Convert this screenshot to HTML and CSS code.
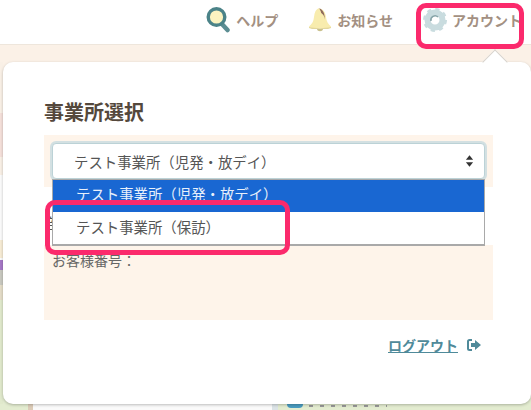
FILE: index.html
```html
<!DOCTYPE html>
<html>
<head>
    <title>事業所選択</title>
    <link rel="stylesheet" href="styles.css">
</head>
<body>
    <header class="topbar">
        <a class="nav-item nav-help">
            <svg width="24" height="26" viewBox="0 0 24 26">
                <path d="M15 16l6.500 7" stroke="#5b8d92" stroke-width="4.500" stroke-linecap="round"/>
                <circle cx="10.500" cy="10" r="8.300" fill="#fbf3c0" stroke="#4b8388" stroke-width="3.400"/>
            </svg>
            <span>ヘルプ</span>
        </a>
        <a class="nav-item nav-notice">
            <svg width="24" height="26" viewBox="0 0 24 26">
                <path d="M11 1C8 2 6.500 5 6 10c-.4 4.500-2 7-5 9.500 0 1 1 1.500 2 1.500h18c1 0 2-.5 2-1.500-3-2.500-4.500-5-5-9.500-.5-5-3-8-7-8.500z" fill="#f8ecae"/>
                <path d="M11 1.500c3.500.5 6 4.500 5.800 11-.2-3.500-2-5.500-3.600-6.500-.4-2-1.200-3.500-2.200-4.500z" fill="#8f6a5c"/>
                <path d="M1 20c5 1.500 17 1.500 22 0v1l-3 1H4l-3-1z" fill="#e2d69c"/>
                <path d="M9 22h6c-.3 3-5.700 3-6 0z" fill="#c9c08c"/>
            </svg>
            <span>お知らせ</span>
        </a>
        <a class="nav-item nav-account">
            <svg width="24" height="24" viewBox="0 0 24 24">
                <circle cx="12" cy="12" r="7.500" fill="none" stroke="#c9dcdf" stroke-width="6"/>
                <circle cx="12" cy="12" r="10.300" fill="none" stroke="#c9dcdf" stroke-width="3.400" stroke-dasharray="4 4.090"/>
                <path d="M8 13a4.200 4.200 0 0 1 7-4" fill="none" stroke="#86a4a8" stroke-width="1.600"/>
            </svg>
            <span>アカウント</span>
        </a>
    </header>
    <div class="band"></div>

    <main class="page">
        <div class="side-strip"></div>
        <section class="popup">
            <div class="popup-arrow"></div>
            <h2 class="popup-title">事業所選択</h2>
            <div class="office-panel">
                <div class="office-box">
                    <div class="select-box">
                        <span>テスト事業所（児発・放デイ）</span>
                        <svg width="9" height="12" viewBox="0 0 10 13">
                            <path d="M5 0l4 5H1zM5 13l4-5H1z" fill="#333"/>
                        </svg>
                    </div>
                </div>
                <div class="dept-row">部署</div>
                <div class="customer-box">お客様番号：</div>
                <ul class="select-list">
                    <li class="selected">テスト事業所（児発・放デイ）</li>
                    <li>テスト事業所（保訪）</li>
                </ul>
            </div>
            <div class="logout-row">
                <a class="logout-link">ログアウト</a>
                <svg width="14" height="12" viewBox="0 0 14 12">
                    <path d="M5 1H2.500A1.500 1.500 0 0 0 1 2.500v7A1.500 1.500 0 0 0 2.500 11H5" fill="none" stroke="#4f8a9a" stroke-width="2"/>
                    <path d="M8 1l6 5-6 5V8H4V4h4z" fill="#4f8a9a"/>
                </svg>
            </div>
        </section>
    </main>

    <footer class="under-strip">
        <div class="under-green"></div>
        <div class="under-white"></div>
        <div class="under-card">
            <span class="under-dot"></span>
            <span class="under-dots"></span>
        </div>
    </footer>

    <div class="mark mark-account"></div>
    <div class="mark mark-option"></div>
</body>
</html>
```

FILE: styles.css
```css
html, body {
    margin: 0;
    height: 410px;
    overflow: hidden;
}

body {
    position: relative;
    font-family: "Noto Sans CJK JP", "Noto Sans", sans-serif;
    color: #555;
    background-color: #e3ecd0;
}

.topbar {
    height: 45px;
    display: flex;
    justify-content: flex-end;
    align-items: center;
    gap: 30px;
    padding-right: 9px;
    background-color: #fff;
    box-sizing: border-box;
    border-bottom: 1px solid #eee6dc;
}

.nav-item {
    display: flex;
    align-items: center;
    gap: 5px;
    font-size: 14px;
    font-weight: bold;
    color: #a39082;
    margin-top: -4px;
}

.nav-help {
    gap: 6px;
}

.band {
    height: 17px;
    background-color: #fbf1e7;
    box-sizing: border-box;
}

.page {
    display: flex;
    height: 342px;
    background: linear-gradient(#fbf1e7 50%, #e3ecd0 50%);
}

.side-strip {
    width: 3px;
    background: linear-gradient(
        #f9f0e6 0 51px,
        #f5e0da 51px 95px,
        #f9f0e6 95px 113px,
        #fbfbfb 113px 178px,
        #f7ecd5 178px 196px,
        #fbfbfb 196px 198px,
        #a678c6 198px 208px,
        #c9c9c0 208px 223px,
        #e4dcc8 223px 238px,
        #e0e9cc 238px
    );
}

.popup {
    position: relative;
    flex: 1;
    box-sizing: border-box;
    padding: 37px 38px 0 41px;
    background-color: #fff;
    border-radius: 10px;
    box-shadow: 0 1px 3px rgba(0, 0, 0, 0.25);
}

.popup-arrow {
    position: absolute;
    top: -9px;
    right: 27px;
    width: 18px;
    height: 18px;
    box-sizing: border-box;
    background-color: #fff;
    border-left: 1px solid #d8d3cc;
    border-top: 1px solid #d8d3cc;
    transform: rotate(45deg);
}

.popup-title {
    margin: 0 0 10px;
    font-size: 20px;
    line-height: 26px;
    font-weight: bold;
    color: #54483c;
}

.office-panel {
    position: relative;
}

.office-box {
    height: 52px;
    padding: 8px;
    box-sizing: border-box;
    background-color: #fef4ea;
}

.select-box {
    display: flex;
    justify-content: space-between;
    align-items: center;
    height: 36px;
    box-sizing: border-box;
    padding: 0 10px 0 21px;
    font-size: 14.4px;
    color: #555;
    background-color: #fff;
    border: 1px solid #bcd2d6;
    border-radius: 4px;
    box-shadow: 0 0 0 2px #d3e0e2;
}

.dept-row {
    height: 58px;
    box-sizing: border-box;
    padding: 26px 0 0 2px;
    font-size: 15px;
    line-height: 20px;
    color: #555;
}

.customer-box {
    height: 75px;
    box-sizing: border-box;
    padding: 5px 0 0 8px;
    font-size: 14px;
    line-height: 20px;
    color: #666;
    background-color: #fef4ea;
}

.select-list {
    position: absolute;
    top: 44px;
    left: 8px;
    right: 8px;
    margin: 0;
    padding: 0;
    list-style: none;
    background-color: #fff;
    border: solid #a9a9a9;
    border-width: 1px 1px 2px;
    font-size: 14.4px;
}

.select-list li {
    height: 32px;
    line-height: 30px;
    padding-left: 23px;
    color: #555;
}

.select-list .selected {
    line-height: 28px;
    color: #e8f0fb;
    background-color: #1967d2;
}

.logout-row {
    display: flex;
    justify-content: flex-end;
    align-items: center;
    gap: 9px;
    margin-top: 15px;
    padding-right: 12px;
}

.logout-link {
    font-size: 14px;
    font-weight: bold;
    color: #4f8a9a;
    text-decoration: underline;
}

.under-strip {
    display: flex;
    height: 6px;
    overflow: hidden;
}

.under-green {
    width: 28px;
    background-color: #e3ecd0;
    border-right: 5px solid #dcccb8;
}

.under-white {
    width: 239px;
    background-color: #fafafa;
    border-right: 6px solid #dbe3e6;
}

.under-card {
    flex: 1;
    display: flex;
    gap: 6px;
    padding-left: 9px;
    background-color: #e3ecd0;
}

.under-dot {
    width: 16px;
    height: 4px;
    border-radius: 0 0 8px 8px;
    background-color: #4a9cc0;
}

.under-dots {
    width: 78px;
    height: 2px;
    margin-top: 1px;
    background: repeating-linear-gradient(90deg, #999 0 4px, transparent 4px 11px);
}

.mark {
    position: absolute;
    box-sizing: border-box;
    border: 5px solid #fb2a6c;
    border-radius: 10px;
}

.mark-account {
    left: 416px;
    top: 3px;
    width: 108px;
    height: 46px;
}

.mark-option {
    left: 45px;
    top: 200px;
    width: 245px;
    height: 55px;
}
```
